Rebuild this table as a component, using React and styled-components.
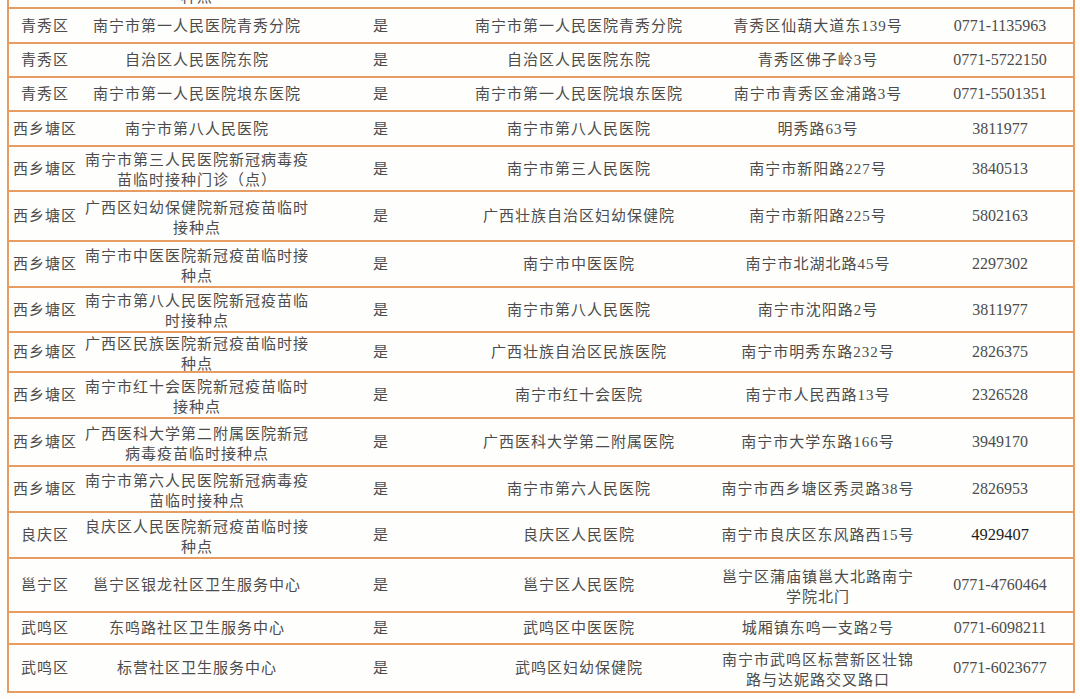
import React from "react";
import styled, { createGlobalStyle } from "styled-components";

const GlobalStyle = createGlobalStyle`
    html, body {
        margin: 0;
        padding: 0;
        background: #fefefd;
    }
    body {
        font-family: "Liberation Serif", "Noto Sans CJK SC", serif;
    }
`;

const BORDER = "#e69c62";

// widths of the six columns, left to right
const COLS = [72, 232, 136, 260, 218, 146];

const Sheet = styled.div`
    margin-left: 7px;
    width: 1068px;
    display: flex;
    flex-direction: column;
    border-left: 2px solid ${BORDER};
    border-right: 2px solid ${BORDER};
    box-sizing: border-box;
    color: #4c4c4c;
`;

const Row = styled.div`
    display: flex;
    height: ${props => props.$h}px;
    box-sizing: border-box;
    border-bottom: 2px solid ${BORDER};
    overflow: hidden;
    align-items: ${props => (props.$cut ? "flex-end" : "stretch")};
`;

const Cell = styled.div`
    width: ${props => props.$w}px;
    flex: none;
    display: flex;
    align-items: center;
    justify-content: center;
    text-align: center;
    white-space: pre-line;
    font-size: 15px;
    line-height: 20px;
    letter-spacing: 1px;
    padding-top: ${props => (props.$two ? 3 : 0)}px;
    box-sizing: border-box;
`;

const Phone = styled.span`
    font-size: 16px;
    letter-spacing: 0;
    color: ${props => (props.$dark ? "#1e1e1e" : "#4c4c4c")};
    font-size: ${props => (props.$dark ? 16.5 : 16)}px;
`;

const rows = [
    { h: 35, d: ["青秀区", "南宁市第一人民医院青秀分院", "是", "南宁市第一人民医院青秀分院", "青秀区仙葫大道东139号", "0771-1135963"] },
    { h: 34, d: ["青秀区", "自治区人民医院东院", "是", "自治区人民医院东院", "青秀区佛子岭3号", "0771-5722150"] },
    { h: 34, d: ["青秀区", "南宁市第一人民医院埌东医院", "是", "南宁市第一人民医院埌东医院", "南宁市青秀区金浦路3号", "0771-5501351"] },
    { h: 35, d: ["西乡塘区", "南宁市第八人民医院", "是", "南宁市第八人民医院", "明秀路63号", "3811977"] },
    { h: 45, d: ["西乡塘区", "南宁市第三人民医院新冠病毒疫\n苗临时接种门诊（点）", "是", "南宁市第三人民医院", "南宁市新阳路227号", "3840513"] },
    { h: 50, d: ["西乡塘区", "广西区妇幼保健院新冠疫苗临时\n接种点", "是", "广西壮族自治区妇幼保健院", "南宁市新阳路225号", "5802163"] },
    { h: 46, d: ["西乡塘区", "南宁市中医医院新冠疫苗临时接\n种点", "是", "南宁市中医医院", "南宁市北湖北路45号", "2297302"] },
    { h: 45, d: ["西乡塘区", "南宁市第八人民医院新冠疫苗临\n时接种点", "是", "南宁市第八人民医院", "南宁市沈阳路2号", "3811977"] },
    { h: 40, d: ["西乡塘区", "广西区民族医院新冠疫苗临时接\n种点", "是", "广西壮族自治区民族医院", "南宁市明秀东路232号", "2826375"] },
    { h: 46, d: ["西乡塘区", "南宁市红十会医院新冠疫苗临时\n接种点", "是", "南宁市红十会医院", "南宁市人民西路13号", "2326528"] },
    { h: 48, d: ["西乡塘区", "广西医科大学第二附属医院新冠\n病毒疫苗临时接种点", "是", "广西医科大学第二附属医院", "南宁市大学东路166号", "3949170"] },
    { h: 46, d: ["西乡塘区", "南宁市第六人民医院新冠病毒疫\n苗临时接种点", "是", "南宁市第六人民医院", "南宁市西乡塘区秀灵路38号", "2826953"] },
    { h: 46, d: ["良庆区", "良庆区人民医院新冠疫苗临时接\n种点", "是", "良庆区人民医院", "南宁市良庆区东风路西15号", "4929407"], dark: true },
    { h: 54, d: ["邕宁区", "邕宁区银龙社区卫生服务中心", "是", "邕宁区人民医院", "邕宁区蒲庙镇邕大北路南宁\n学院北门", "0771-4760464"] },
    { h: 32, d: ["武鸣区", "东鸣路社区卫生服务中心", "是", "武鸣区中医医院", "城厢镇东鸣一支路2号", "0771-6098211"] },
    { h: 48, d: ["武鸣区", "标营社区卫生服务中心", "是", "武鸣区妇幼保健院", "南宁市武鸣区标营新区壮锦\n路与达妮路交叉路口", "0771-6023677"] },
];

function App() {
    return (
        <>
            <GlobalStyle />
            <Sheet>
                {/* the row above is cut off by the screenshot, only its last line peeks in */}
                <Row $h={9} $cut>
                    <Cell $w={COLS[0]} />
                    <Cell $w={COLS[1]}>种点</Cell>
                </Row>
                {rows.map((row, i) => (
                    <Row key={i} $h={row.h}>
                        {row.d.map((text, j) => {
                            const two = text.includes("\n");
                            if (j === 5) {
                                return (
                                    <Cell key={j} $w={COLS[j]}>
                                        <Phone $dark={row.dark}>{text}</Phone>
                                    </Cell>
                                );
                            }
                            return (
                                <Cell key={j} $w={COLS[j]} $two={two}>
                                    {text}
                                </Cell>
                            );
                        })}
                    </Row>
                ))}
            </Sheet>
        </>
    );
}

export default App;
